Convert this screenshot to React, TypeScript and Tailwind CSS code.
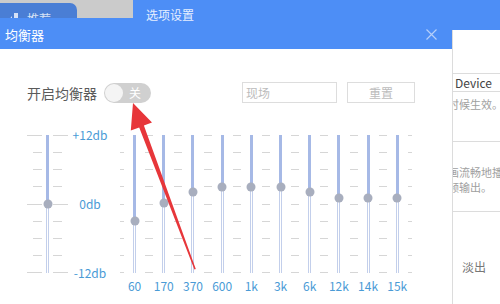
const bands = [
  { label: '60', knob: 86 },
  { label: '170', knob: 68 },
  { label: '370', knob: 57 },
  { label: '600', knob: 52 },
  { label: '1k', knob: 52 },
  { label: '3k', knob: 52 },
  { label: '6k', knob: 57 },
  { label: '12k', knob: 63 },
  { label: '14k', knob: 63 },
  { label: '15k', knob: 63 },
];

const rows = [0, 1, 2, 3, 4, 5, 6, 7, 8];

function Track({ knob }: { knob: number }) {
  return (
    <div className="relative flex h-full w-[3px] flex-col">
      <div className="bg-[#a6b9e6]" style={{ height: knob }} />
      <div className="flex-1 border-x border-[#c3cfeb]" />
      <div
        className="absolute left-1/2 size-[9px] -translate-x-1/2 -translate-y-1/2 rounded-full bg-[#a8aebe]"
        style={{ top: knob }}
      />
    </div>
  );
}

function PreampTicks({ side }: { side: 'left' | 'right' }) {
  return (
    <div className={`flex h-full w-[15px] flex-col justify-between ${side === 'left' ? 'items-end' : 'items-start'}`}>
      {rows.map((i) => (
        <div className={`h-px bg-[#d6d6d6] ${i % 4 === 0 ? 'w-[15px]' : 'w-[9px]'}`} key={i} />
      ))}
    </div>
  );
}

function HalfTicks() {
  return (
    <div className="flex h-full w-[4px] flex-col justify-between">
      {rows.map((i) => (
        <div className="h-px w-full bg-[#d6d6d6]" key={i} />
      ))}
    </div>
  );
}

function Equalizer() {
  return (
    <div className="mt-[25px] flex items-start">
      <div className="mt-[7px] flex h-[138px]">
        <PreampTicks side="left" />
        <div className="flex w-[11px] justify-center">
          <Track knob={69} />
        </div>
        <PreampTicks side="right" />
      </div>

      <div className="flex h-[152px] w-[44px] flex-col items-center justify-between text-[12px] leading-[14px] text-[#4a9bd6]">
        <span>+12db</span>
        <span>0db</span>
        <span>-12db</span>
      </div>

      <div className="ml-[8px] flex">
        {bands.map((band) => (
          <div className="flex w-[29.2px] flex-col items-center" key={band.label}>
            <div className="mt-[7px] flex h-[138px] w-full justify-between">
              <HalfTicks />
              <Track knob={band.knob} />
              <HalfTicks />
            </div>
            <span className="mt-[6px] text-[12px] leading-[14px] text-[#4a9bd6]">{band.label}</span>
          </div>
        ))}
      </div>
    </div>
  );
}

function RightPanel() {
  return (
    <div className="flex w-[48px] flex-col">
      <div className="h-[12px] bg-[#4d8ef6]" />
      <div className="flex flex-1 flex-col overflow-hidden border-l border-[#dcdcdc] bg-white">
        <div className="h-[43px] shrink-0" />
        <div className="h-[19px] shrink-0 border-y border-[#dcdcdc] pl-[2px] text-[12px] leading-[17px] text-[#444]">
          Device
        </div>
        <div className="-ml-[5px] whitespace-nowrap pt-[5px] text-[11px] leading-[14px] text-[#a0a0a0]">时候生效。这</div>
        <div className="mt-[30px] h-px shrink-0 bg-[#dcdcdc]" />
        <div className="-ml-[5px] mt-[23px] whitespace-nowrap text-[11px] leading-[15px] text-[#a0a0a0]">
          <div>画流畅地播放</div>
          <div>频输出。</div>
        </div>
        <div className="mt-[16px] h-px shrink-0 bg-[#dcdcdc]" />
        <div className="mt-[45px] flex items-center">
          <span className="ml-[9px] whitespace-nowrap text-[12px] leading-[14px] text-[#777]">淡出</span>
          <div className="ml-[14px] h-[20px] w-[20px] shrink-0 border border-[#cfcfcf] pl-[3px] text-[12px] leading-[18px] text-[#333]">
            6
          </div>
        </div>
      </div>
    </div>
  );
}

function CloseIcon() {
  return (
    <svg aria-hidden="true" fill="none" height="11" viewBox="0 0 11 11" width="11">
      <path d="M0.5 0.5l10 10M10.5 0.5l-10 10" stroke="#b5cffa" strokeWidth="1.2" />
    </svg>
  );
}

function RedArrow() {
  return (
    <svg aria-hidden="true" className="pointer-events-none absolute left-0 top-0" height="304" viewBox="0 0 500 304" width="500">
      <polygon
        fill="#e7363a"
        points="133,103 152,122.5 143.9,125.4 195.8,269 194.4,269.6 139.2,127.6 130.8,130.6"
      />
    </svg>
  );
}

export default function App() {
  return (
    <div className="relative h-[304px] w-[500px] overflow-hidden bg-white font-['Noto_Sans_CJK_SC','Microsoft_YaHei',sans-serif]">
      <div className="flex h-[18px]">
        <div className="w-[77px] bg-[#cbcbcb] pt-[3px]">
          <div className="flex h-[15px] items-start gap-[7px] overflow-hidden rounded-tr-[7px] bg-[#4a7ed5] pl-[4px] pt-[10px]">
            <svg aria-hidden="true" className="shrink-0" fill="#d6e2f7" height="12" viewBox="0 0 16 12" width="16">
              <path d="M1 12 8 3v9Z" />
              <rect height="12" width="4" x="10" y="0" />
            </svg>
            <span className="text-[12px] leading-[12px] text-[#d6e2f7]">推荐</span>
          </div>
        </div>
        <div className="w-[56px] bg-[#cbcbcb]" />
        <div className="flex-1 bg-[#4d8ef6] pl-[13px]">
          <span className="relative z-10 block pt-[7px] text-[12px] leading-[15px] text-[#e6efff]">选项设置</span>
        </div>
      </div>

      <div className="flex h-[286px]">
        <div className="flex w-[452px] flex-col">
          <div className="flex h-[31px] items-center justify-between bg-[#4d8ef6] pl-[5px] pr-[15px] pt-[2px]">
            <span className="text-[13px] text-white">均衡器</span>
            <CloseIcon />
          </div>

          <div className="flex-1 bg-white pl-[27px] pt-[33px]">
            <div className="flex h-[21px] items-center">
              <span className="text-[14px] leading-[20px] text-[#5a5a5a]">开启均衡器</span>
              <button
                className="ml-[7px] flex h-[20px] w-[47px] items-center rounded-full bg-[#d0d0d0] pl-[1px]"
                type="button"
              >
                <span className="size-[18px] rounded-full bg-[#f4f4f4]" />
                <span className="ml-[6px] text-[12px] leading-[14px] text-white">关</span>
              </button>
              <div className="ml-[91px] h-[21px] w-[95px] border border-[#dddddd] pl-[3px] text-[12px] leading-[19px] text-[#bcbcbc]">
                现场
              </div>
              <button
                className="ml-[10px] h-[21px] w-[68px] border border-[#dddddd] text-[12px] leading-[19px] text-[#bcbcbc]"
                type="button"
              >
                重置
              </button>
            </div>

            <Equalizer />
          </div>
        </div>

        <RightPanel />
      </div>

      <RedArrow />
    </div>
  );
}
